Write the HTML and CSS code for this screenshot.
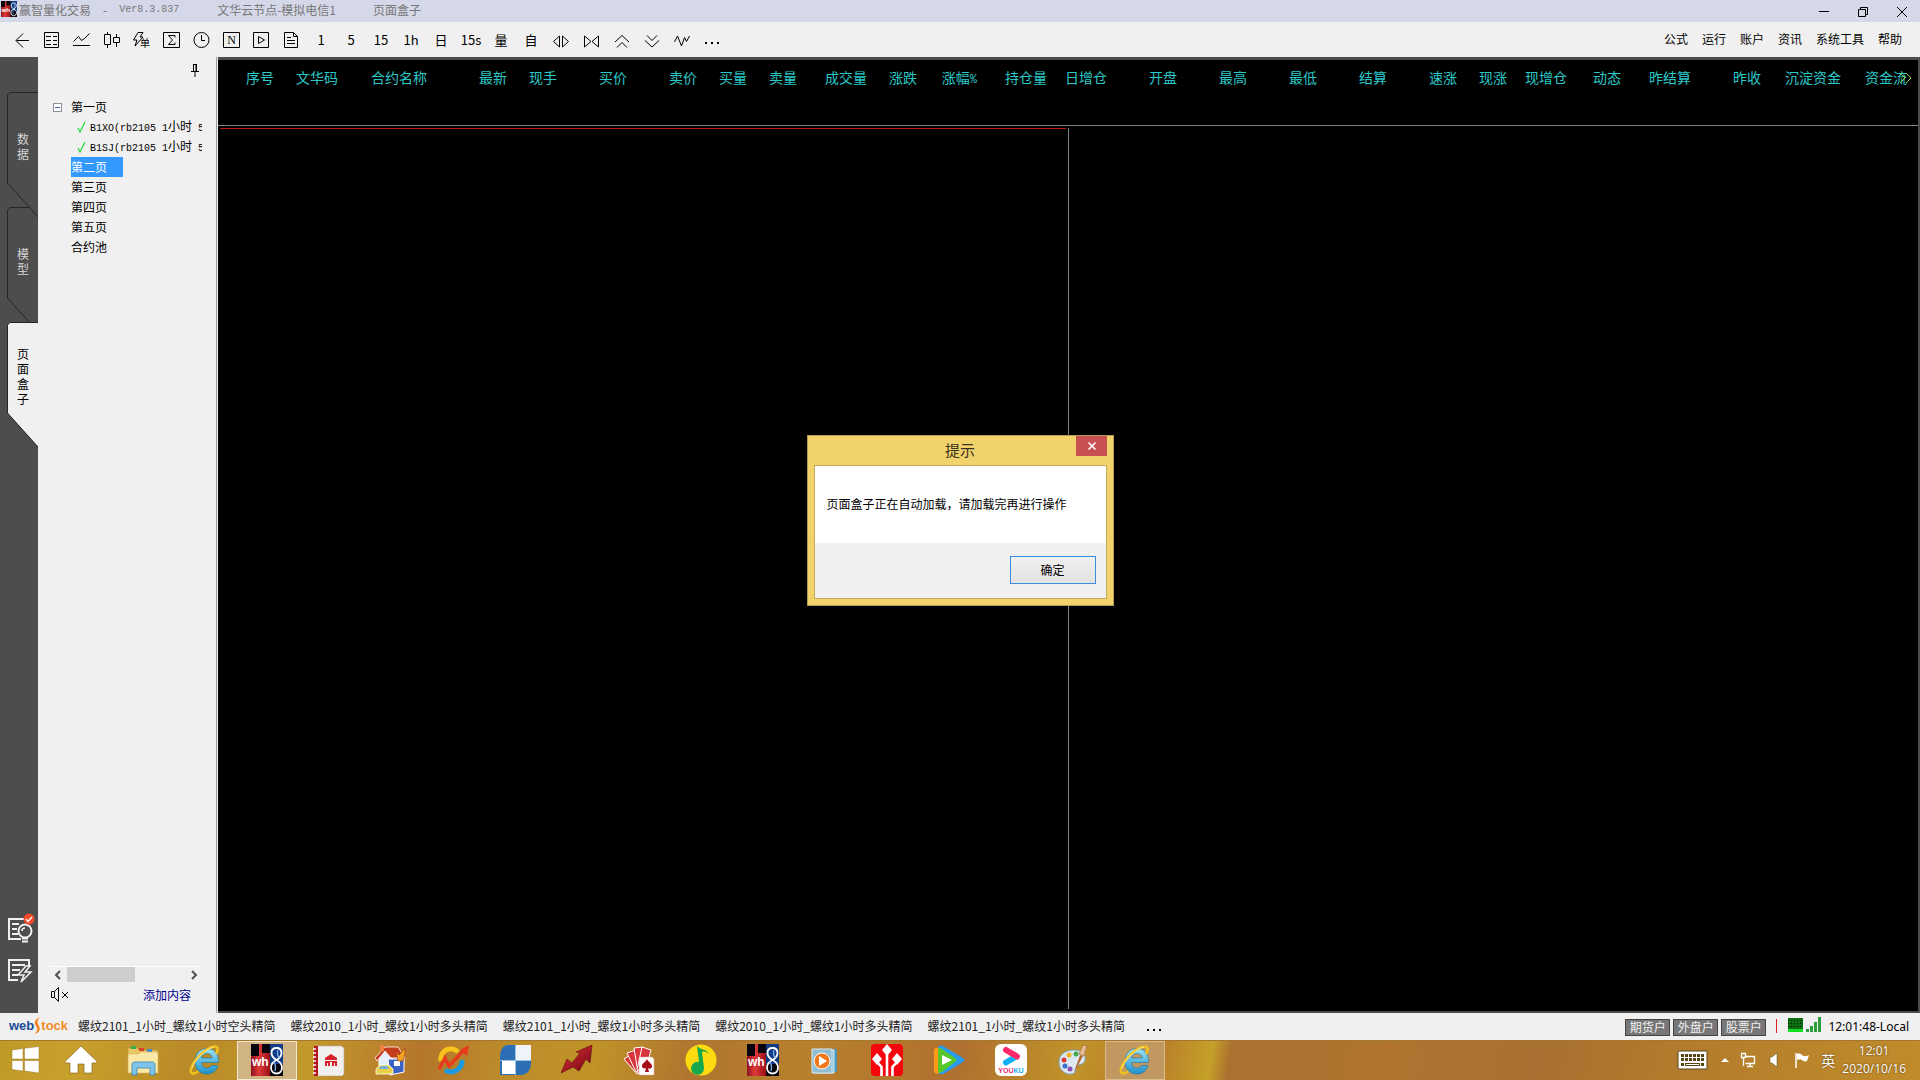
FILE: index.html
```html
<!DOCTYPE html>
<html lang="zh-CN">

<head>
    <meta charset="UTF-8">
    <meta name="viewport" content="width=device-width, initial-scale=1.0">
    <title>赢智量化交易</title>
    <link rel="stylesheet" href="styles.css">
</head>

<body>
    <!-- Shared icons -->
    <svg class="defs" width="0" height="0" aria-hidden="true">
        <defs>
            <linearGradient id="ieBlue" x1="0" y1="0" x2="0" y2="1">
                <stop offset="0" stop-color="#9be4f8" />
                <stop offset="1" stop-color="#1e8fc9" />
            </linearGradient>
            <linearGradient id="whRed" x1="0" y1="0" x2="1" y2="0">
                <stop offset="0" stop-color="#8c1020" />
                <stop offset="0.4" stop-color="#e03a3a" />
                <stop offset="1" stop-color="#9a1018" />
            </linearGradient>
            <linearGradient id="arrowRed" x1="0" y1="0" x2="1" y2="1">
                <stop offset="0" stop-color="#e8323c" />
                <stop offset="1" stop-color="#6a0410" />
            </linearGradient>
        </defs>
        <symbol id="ie" viewBox="0 0 32 32">
            <path d="M29.500 18.500H12.500c.3 3.500 2.500 5.500 5.500 5.500 2.200 0 3.800-1 4.600-2.500h6.400C27.500 26.500 23.500 30 18 30 10.500 30 6 25 6 17.500S10.500 4.500 18 4.500s12 6 11.500 14zM12.600 14h10.600c-.3-2.800-2.200-4.500-5.200-4.500s-5 1.700-5.400 4.500z" fill="url(#ieBlue)" fill-rule="evenodd" stroke="#1874a8" stroke-width="0.600" />
            <path d="M27.500 9c2-4 1.500-7-2-6.500C17 3.500 5 15 2 25c-1 4.500 1.500 6 6.500 3" fill="none" stroke="#f3c11c" stroke-width="2.600" stroke-linecap="round" />
            <path d="M25 3C17 4.500 6 15 3 24" fill="none" stroke="#fff0a0" stroke-width="0.800" />
        </symbol>
        <symbol id="wh" viewBox="0 0 32 32">
            <rect width="32" height="32" fill="#08060c" />
            <rect x="19" width="13" height="20" fill="#143c86" />
            <path d="M8 0h3v9h8v23H0V12h8z" fill="url(#whRed)" />
            <path d="M25.500 16c-3.500-2-5-4.500-5-7 0-3 2-5 5-5s5 2 5 5c0 2.500-1.500 5-5 7-4 2-5.500 4.500-5.500 7.500 0 3.500 2.300 6 5.500 6s5.500-2.500 5.500-6c0-3-1.500-5.500-5.500-7.500z" fill="none" stroke="#fff" stroke-width="1.800" />
            <path d="M22.500 18c2 2 2.500 5 1.500 9M28.500 14c-2-2-2.500-5-1.500-8" fill="none" stroke="#7db7ee" stroke-width="1.200" />
            <text x="1" y="22" class="wh-text">wh</text>
        </symbol>
    </svg>

    <div class="app">
        <header class="title-bar">
            <svg class="title-icon" width="16" height="16"><use href="#wh" /></svg>
            <span class="title-name">赢智量化交易</span>
            <span class="title-dash">-</span>
            <span class="title-version">Ver8.3.837</span>
            <span class="title-node">文华云节点-模拟电信1</span>
            <span class="title-page">页面盒子</span>
            <div class="window-controls">
                <button type="button" aria-label="最小化"><svg width="12" height="12"><path d="M1 5.500h10" stroke="#000" /></svg></button>
                <button type="button" aria-label="还原"><svg width="12" height="12"><path d="M1.500 3.500h7v7h-7zM3.500 3.500v-2h7v7h-2" fill="none" stroke="#000" /></svg></button>
                <button type="button" aria-label="关闭"><svg width="12" height="12"><path d="M1 1l10 10M11 1L1 11" stroke="#000" /></svg></button>
            </div>
        </header>

        <div class="toolbar">
            <div class="tools">
                <button type="button" aria-label="返回"><svg width="20" height="20"><path d="M17 10.500H4.500M11 3.500l-7 7 7 7" /></svg></button>
                <button type="button" aria-label="报价"><svg width="20" height="20"><path d="M2.500 2.500h14v15h-14zM4 6.500h5M11 6.500h4M4 10.500h5M11 10.500h4M4 14.500h5M11 14.500h4" /></svg></button>
                <button type="button" aria-label="分时"><svg width="20" height="20"><path d="M1 15.500h17M1.500 11.500l5-5 3 4 3-2 5-5" /></svg></button>
                <button type="button" aria-label="K线"><svg width="20" height="20"><path d="M2.500 4.500h6v10h-6zM5.500 2v2.500M5.500 14.500V18M11.500 7.500h6v5h-6zM14.500 4v3.500M14.500 12.500V17" /></svg></button>
                <button type="button" aria-label="闪电下单"><svg width="20" height="20"><path d="M6 2.500h5L8 7h3l-8 9 2-6H1.500z" /><text x="8" y="17" class="tool-mini">单</text></svg></button>
                <button type="button" aria-label="统计"><svg width="20" height="20"><path d="M1.500 2.500h16v15h-16zM13 7.500v-2H6.500l4 4.500-4 4.500H13v-2" /></svg></button>
                <button type="button" aria-label="时间"><svg width="20" height="20"><circle cx="9.500" cy="10" r="7.500" /><path d="M9.500 5v5.500H13" /></svg></button>
                <button type="button" aria-label="新闻"><svg width="20" height="20"><path d="M1.500 2.500h16v15h-16z" /><text x="9.500" y="14" class="tool-serif">N</text></svg></button>
                <button type="button" aria-label="播放"><svg width="20" height="20"><path d="M1.500 2.500h15v15h-15zM6.500 6.500v7l6-3.500z" /></svg></button>
                <button type="button" aria-label="文档"><svg width="20" height="20"><path d="M2.500 2.500h9l4 4v11h-13zM11.500 2.500v4h4M5 7.500h4M5 10.500h8M5 13.500h8" /></svg></button>
                <button type="button">1</button>
                <button type="button">5</button>
                <button type="button">15</button>
                <button type="button">1h</button>
                <button type="button">日</button>
                <button type="button">15s</button>
                <button type="button">量</button>
                <button type="button">自</button>
                <button type="button" aria-label="展开"><svg width="20" height="20"><path d="M7.500 6v11l-6-5.500zM10.500 6v11l6-5.500z" /></svg></button>
                <button type="button" aria-label="收缩"><svg width="20" height="20"><path d="M2.500 6v11l6.500-5.500zM16.500 6v11L10 11.500z" /></svg></button>
                <button type="button" aria-label="向上"><svg width="20" height="20"><path d="M3 12l7-6.500 7 6.500M5 17.500l5-5 5 5" /></svg></button>
                <button type="button" aria-label="向下"><svg width="20" height="20"><path d="M3 10.500l7 6.500 7-6.500M5 5.500l5 5 5-5" /></svg></button>
                <button type="button" aria-label="指标"><svg width="20" height="20"><path d="M2.500 12l3-6 4 10 3-8.500 2 4L17.500 6" /></svg></button>
                <button type="button" aria-label="更多"><svg width="20" height="20"><path d="M3 13h2M9 13h2M15 13h2" class="dots" /></svg></button>
            </div>
            <nav class="menu">
                <a href="#">公式</a>
                <a href="#">运行</a>
                <a href="#">账户</a>
                <a href="#">资讯</a>
                <a href="#">系统工具</a>
                <a href="#">帮助</a>
            </nav>
        </div>

        <main class="main">
            <aside class="side-tabs">
                <button type="button" class="side-tab front">
                    <svg width="31" height="126"><path d="M31 .5H3L.500 3v88L31 125" /></svg>
                    <span>数据</span>
                </button>
                <button type="button" class="side-tab">
                    <svg width="31" height="126"><path d="M31 .5H3L.500 3v88L31 125" /></svg>
                    <span>模型</span>
                </button>
                <button type="button" class="side-tab active">
                    <svg width="31" height="126"><path d="M31 .5H3L.500 3v88L31 125" /></svg>
                    <span>页面盒子</span>
                </button>
                <div class="side-actions">
                    <button type="button" aria-label="提示">
                        <svg width="28" height="32" fill="none" stroke="#f0f0f0" stroke-width="2">
                            <path d="M18 6H2v20h12M5 11h7M5 16h5M5 21h6" />
                            <circle cx="18" cy="18" r="6.500" fill="#4d4d4d" />
                            <path d="M15 25.500h6M15 28.500h6" />
                            <path d="M15 18a3 3 0 0 1 3-3" stroke-width="1.500" />
                            <circle cx="22" cy="6" r="5.500" fill="#f04a28" stroke="none" />
                            <path d="M19 6l2 2.500 4-4.500" stroke-width="1.500" />
                        </svg>
                    </button>
                    <button type="button" aria-label="快速下单">
                        <svg width="28" height="28" fill="none" stroke="#f0f0f0" stroke-width="2">
                            <path d="M22 9V3H2v20h9M5 8h13M5 13h8M5 18h6" />
                            <path d="M19 9l-8 9h6l-3 7 10-10h-6l5-6z" fill="#4d4d4d" stroke-width="1.500" />
                        </svg>
                    </button>
                </div>
            </aside>

            <section class="tree-panel">
                <button type="button" class="pin" aria-label="固定"><svg width="8" height="14"><path d="M2.500 1v7M5.500 1v7M2 1.500h4M0 8.500h8M4 9v5M5 1v7" fill="none" stroke="#000" /></svg></button>
                <ul class="tree">
                    <li>
                        <svg class="expander" width="9" height="9"><rect x="0.500" y="0.500" width="8" height="8" fill="#fff" stroke="#8e9299" /><path d="M2 4.500h5" stroke="#3c5ab4" /></svg>
                        <span>第一页</span>
                    </li>
                    <li class="child">
                        <svg width="9" height="12"><path d="M1 7l2 4 5-10" fill="none" stroke="#1fdc3c" stroke-width="1.200" /></svg>
                        <span><i>B1XO(rb2105 1</i>小时<i> 5</i></span>
                    </li>
                    <li class="child">
                        <svg width="9" height="12"><path d="M1 7l2 4 5-10" fill="none" stroke="#1fdc3c" stroke-width="1.200" /></svg>
                        <span><i>B1SJ(rb2105 1</i>小时<i> 5</i></span>
                    </li>
                    <li><span class="selected">第二页</span></li>
                    <li><span>第三页</span></li>
                    <li><span>第四页</span></li>
                    <li><span>第五页</span></li>
                    <li><span>合约池</span></li>
                </ul>
                <div class="scrollbar">
                    <svg width="17" height="16"><path d="M10 4L6 8l4 4" /></svg>
                    <div class="scroll-track"><div class="scroll-thumb"></div></div>
                    <svg width="17" height="16"><path d="M7 4l4 4-4 4" /></svg>
                </div>
                <div class="tree-footer">
                    <button type="button" aria-label="静音"><svg width="20" height="16" fill="none" stroke="#000"><path d="M1.500 4.500h3v6h-3zM4.500 4.500l4-4v14l-4-4M12 5l6 6M18 5l-6 6" /></svg></button>
                    <a href="#">添加内容</a>
                </div>
            </section>

            <section class="workspace">
                <div class="quote-head">
                    <table class="quotes">
                        <colgroup>
                            <col class="w56"><col class="w64"><col class="w89"><col class="w80"><col class="w50">
                            <col class="w70"><col class="w70"><col class="w50"><col class="w50"><col class="w70">
                            <col class="w50"><col class="w60"><col class="w70"><col class="w60"><col class="w70">
                            <col class="w70"><col class="w70"><col class="w70"><col class="w70"><col class="w50">
                            <col class="w60"><col class="w54"><col class="w70"><col class="w70"><col class="w80">
                            <col class="w66">
                        </colgroup>
                        <thead>
                            <tr>
                                <th>序号</th>
                                <th>文华码</th>
                                <th>合约名称</th>
                                <th>最新</th>
                                <th>现手</th>
                                <th>买价</th>
                                <th>卖价</th>
                                <th>买量</th>
                                <th>卖量</th>
                                <th>成交量</th>
                                <th>涨跌</th>
                                <th>涨幅<i>%</i></th>
                                <th>持仓量</th>
                                <th>日增仓</th>
                                <th>开盘</th>
                                <th>最高</th>
                                <th>最低</th>
                                <th>结算</th>
                                <th>速涨</th>
                                <th>现涨</th>
                                <th>现增仓</th>
                                <th>动态</th>
                                <th>昨结算</th>
                                <th>昨收</th>
                                <th>沉淀资金</th>
                                <th>资金流</th>
                            </tr>
                        </thead>
                    </table>
                    <button type="button" class="more-cols" aria-label="更多列"><svg width="14" height="14"><path d="M1 2l5 5-5 5M7 2l5 5-5 5" fill="none" stroke="#8fd43c" /></svg></button>
                </div>
                <div class="panes">
                    <div class="pane pane-left"></div>
                    <div class="pane pane-right"></div>
                </div>
            </section>
        </main>

        <footer class="status-bar">
            <div class="brand"><span class="brand-web">web</span><svg width="7" height="18"><path d="M6 0C0 3 0 6 2 9s2 5-2 8c5-1 7-4 5-8S3 4 6 0z" fill="#f58220" /></svg><span class="brand-tock">tock</span></div>
            <ul class="models">
                <li>螺纹2101_1小时_螺纹1小时空头精简</li>
                <li>螺纹2010_1小时_螺纹1小时多头精简</li>
                <li>螺纹2101_1小时_螺纹1小时多头精简</li>
                <li>螺纹2010_1小时_螺纹1小时多头精简</li>
                <li>螺纹2101_1小时_螺纹1小时多头精简</li>
            </ul>
            <button type="button" class="status-more" aria-label="更多"><svg width="16" height="4"><path d="M1 2h2M7 2h2M13 2h2" stroke="#000" stroke-width="2" /></svg></button>
            <div class="accounts">
                <button type="button">期货户</button>
                <button type="button">外盘户</button>
                <button type="button">股票户</button>
            </div>
            <svg class="signals" width="46" height="18">
                <path d="M.5 2v14" stroke="#e02020" />
                <path d="M12 1h15v11H12z" fill="#0b6e12" />
                <path d="M12 3.500h15M12 6.500h15M12 9.500h15" stroke="#001a00" stroke-dasharray="1 2" />
                <path d="M12 12h15v3H12z" fill="#10e020" />
                <path d="M30 12h3v3h-3zM34 9h3v6h-3zM38 5h3v10h-3zM42 0h3v15h-3z" fill="#2f9a38" />
            </svg>
            <span class="local-time">12:01:48-Local</span>
        </footer>

        <div class="dialog-layer">
            <div class="dialog" role="dialog" aria-labelledby="dialogTitle">
                <h2 id="dialogTitle">提示</h2>
                <button type="button" class="dialog-close" aria-label="关闭"><svg width="10" height="10"><path d="M1.500 1.500l7 7M8.500 1.500l-7 7" stroke="#fff" stroke-width="1.600" /></svg></button>
                <div class="dialog-body">
                    <p>页面盒子正在自动加载，请加载完再进行操作</p>
                    <div class="dialog-actions">
                        <button type="button" class="ok">确定</button>
                    </div>
                </div>
            </div>
        </div>
    </div>

    <div class="taskbar">
        <button type="button" class="start" aria-label="开始"><svg width="32" height="32"><path d="M2 6l11-1.500V15H2zM14.500 4.300L29 2.500V15H14.500zM2 16.500h11V27L2 25.500zM14.500 16.500H29V29l-14.500-2z" fill="#fff" stroke="#8a6410" stroke-width="0.400" /></svg></button>
        <button type="button" aria-label="主页"><svg width="32" height="32"><path d="M16 2L0 17.500l1 1.500h4v10h8v-9h6v9h8V19h4l1-1.500z" fill="#fff" stroke="#7a5a14" stroke-width="0.600" /></svg></button>
        <button type="button" aria-label="文件夹"><svg width="32" height="32">
            <path d="M1 4h9l2 2h18v22H1z" fill="#e9c763" stroke="#b7923a" stroke-width="0.600" />
            <path d="M4 2h5v3H4z" fill="#35b048" /><path d="M12 4h5v3h-5z" fill="#d8402c" /><path d="M20 5h5v3h-5z" fill="#3c8fd8" />
            <path d="M1 10h11l2-2h17v21H1z" fill="#fae9a6" stroke="#d4b45c" stroke-width="0.600" />
            <path d="M5 31V21c0-2 1-3 3-3h17c2 0 3 1 3 3v10h-5v-7H10v7z" fill="#7ec3ea" stroke="#3b85b4" stroke-width="0.800" />
        </svg></button>
        <button type="button" aria-label="浏览器"><svg width="32" height="32"><use href="#ie" /></svg></button>
        <button type="button" class="running current" aria-label="赢智"><svg width="32" height="32"><use href="#wh" /></svg></button>
        <button type="button" aria-label="通讯录"><svg width="32" height="32">
            <path d="M3 2h25l3 2v26l-2 2H3z" fill="#f2f0ee" stroke="#b9a9a0" stroke-width="0.600" />
            <path d="M1 2h4v30H1z" fill="#b41420" />
            <path d="M0 5h3M0 9h3M0 13h3M0 17h3M0 21h3M0 25h3M0 29h3" stroke="#fff" stroke-width="1.400" />
            <path d="M12 14l6-4 6 4v2H12zM12 17h12v5h-2v-3h-1v3h-2v-4h-2v4h-2v-3h-1v3h-2z" fill="#d8202a" />
        </svg></button>
        <button type="button" aria-label="房产"><svg width="32" height="32">
            <path d="M4 14l8-8 6 7v16H4z" fill="#e6eefc" stroke="#fff" /><path d="M13 15h16v13l-14 3z" fill="#3a62c4" stroke="#fff" />
            <path d="M19 17h6v5h-6z" fill="#fff" />
            <path d="M0 14L10 3h13l7 11H16L10 7 2 17z" fill="#c43c1c" stroke="#fff" stroke-width="0.800" />
            <path d="M5 1h4v6H5z" fill="#f08040" />
            <path d="M21 7l3 4 6-7v6l-2 7h-5z" fill="#f4a020" stroke="#a03810" stroke-width="0.600" />
            <path d="M1 25l4-4h9l4 4v5H1z" fill="#e8d048" stroke="#fff" stroke-width="0.800" /><path d="M6 22h6l2 3H4z" fill="#6fb0e0" />
        </svg></button>
        <button type="button" aria-label="行情"><svg width="32" height="32" fill="none">
            <path d="M4 17a10 10 0 0 1 17-9" stroke="#f7c41c" stroke-width="5" />
            <path d="M25 16a11 11 0 0 1-17 10" stroke="#1e9ae0" stroke-width="5" />
            <path d="M2 25l6-11 4 8L27 6" stroke="#e83a1c" stroke-width="3.500" /><path d="M32 1l-2 11-7-6z" fill="#e83a1c" />
        </svg></button>
        <button type="button" aria-label="方格"><svg width="32" height="32">
            <path d="M9 1h23v18c0 7-4 12-10 12H1V13C1 6 4 1 9 1z" fill="#2d6fb4" />
            <path d="M17 1h15v15H17z" fill="#eef4fa" /><path d="M3 17h13v13H3z" fill="#fff" />
            <path d="M16.500 1v30M1 16.500h31" stroke="#9cc2e6" />
        </svg></button>
        <button type="button" aria-label="走势"><svg width="32" height="32"><path d="M0 29l6-14 5 4 8-10-4-1 16-7-2 18-4-4-7 12-6-4z" fill="url(#arrowRed)" stroke="#600810" stroke-width="0.600" /></svg></button>
        <button type="button" aria-label="纸牌"><svg width="32" height="32">
            <g fill="#d8343c" stroke="#fff"><path d="M1 15l8-5 12 15-7 5z" /><path d="M4 9l9-3 8 19-8 3z" /><path d="M11 4l9-1 3 24-8 2z" /><path d="M19 3l9 3-6 22-8-2z" /></g>
            <path d="M16 13h13l2 2v16H16z" fill="#fff" stroke="#d0a0a0" stroke-width="0.500" />
            <path d="M24 15c1 3 6 5 5 8-1 2-3 2-4 1l1 4h-4l1-4c-2 1-4 0-4-2 0-3 4-4 5-7z" fill="#a80c18" />
        </svg></button>
        <button type="button" aria-label="音乐"><svg width="32" height="32"><circle cx="16" cy="16" r="15.500" fill="#fcdc10" /><path d="M12 2c3 4 10 3 12 8-2-2-5-3-7-2l2 16a6.500 6.500 0 1 1-5-6z" fill="#17a84e" /></svg></button>
        <button type="button" aria-label="赢智"><svg width="32" height="32"><use href="#wh" /></svg></button>
        <button type="button" aria-label="播放器"><svg width="32" height="32">
            <path d="M8 5h20v23H8z" fill="#4a96bc" /><path d="M5 6h20v23H5z" fill="#78b6d4" stroke="#e0f0f8" /><path d="M3 5h20v24H3z" fill="#8fbdd2" stroke="#d6e8f0" />
            <circle cx="13" cy="17" r="8" fill="#f07818" stroke="#fff" /><path d="M10 12v10l8-5z" fill="#fff" />
        </svg></button>
        <button type="button" aria-label="证券"><svg width="32" height="32">
            <rect width="32" height="32" rx="4" fill="#f4040c" />
            <path d="M16 0l5 6-5 6-5-6zM6 9l5 6-5 6-5-6zM26 9l5 6-5 6-5-6z" fill="#fff" />
            <path d="M16 10v22M6 18l4.500 5v9M26 18l-4.500 5v9" fill="none" stroke="#fff" stroke-width="2.600" />
        </svg></button>
        <button type="button" aria-label="视频"><svg width="32" height="32">
            <path d="M5 4c0-2 2-3 5-2l20 12c2 1 2 3 0 4L12 29C7 32 5 30 5 26z" fill="#2a9cf0" />
            <path d="M1 7c0-3 2-4 5-3v25c-3 2-5 0-5-3z" fill="#ff9a18" />
            <path d="M5 6c0-2 2-2 4-1l13 9c2 1 2 3 0 4L9 28c-2 1-4 1-4-1z" fill="#56c828" /><path d="M9 11v10l10-5z" fill="#fff" />
        </svg></button>
        <button type="button" aria-label="优酷"><svg width="32" height="32">
            <rect width="32" height="32" rx="6" fill="#fff" />
            <path d="M11 18.500l10-6" stroke="#10b0f8" stroke-width="6" stroke-linecap="round" /><path d="M11 6l11 6.500" stroke="#ff2868" stroke-width="6" stroke-linecap="round" />
            <text x="16" y="29" class="youku-text">YOU<tspan class="youku-blue">KU</tspan></text>
        </svg></button>
        <button type="button" aria-label="画图"><svg width="32" height="32">
            <path d="M2 18C2 10 9 6 17 6s12 5 11 10-6 4-8 6 1 7-5 8C8 31 2 26 2 18z" fill="#dce9f4" stroke="#7da0bc" />
            <circle cx="7" cy="16" r="2.500" fill="#e03a30" /><circle cx="12" cy="11" r="2.500" fill="#f0b420" /><circle cx="19" cy="10" r="2.500" fill="#40a848" /><circle cx="8" cy="22" r="2.500" fill="#3a70d0" /><circle cx="13" cy="25" r="2.500" fill="#8a50b8" />
            <path d="M16 31l7-20 3 1z" fill="#b86c30" /><path d="M22 10l4-9 4 1-3 10z" fill="#e8b890" stroke="#a06838" stroke-width="0.600" />
        </svg></button>
        <button type="button" class="running" aria-label="浏览器窗口"><svg width="32" height="32"><use href="#ie" /></svg></button>

        <div class="tray">
            <svg width="31" height="20"><rect x="1" y="1" width="29" height="18" rx="1" fill="#fff" stroke="#5a4416" /><path d="M4 5.500h23M4 9.500h23" stroke="#5a4416" stroke-width="3" stroke-dasharray="3 1" /><path d="M4 14.500h3M8 14.500h15M24 14.500h3" stroke="#5a4416" stroke-width="3" /><path d="M9 14.500h13" stroke="#fff" /></svg>
            <svg width="8" height="6"><path d="M0 5l4-4 4 4z" fill="#fff" /></svg>
            <svg width="16" height="16" fill="none" stroke="#fff"><path d="M6 4.500h8.500v7h-9M7 14.500h6M10 12v2M1.500 1.500h4v4h-4zM3.500 6v8" stroke-width="1.300" /></svg>
            <svg width="16" height="16"><path d="M3 5h2l5-4v14l-5-4H3z" fill="#fff" stroke="#5a4416" stroke-width="0.500" /></svg>
            <svg width="16" height="16"><path d="M2 1v15" stroke="#fff" stroke-width="1.500" /><path d="M3 2c3-1 4 0 5 1s4 2 7 0l-2 6c-2 1-4 0-5-1s-3-1-5 0z" fill="#fff" /></svg>
            <span class="lang">英</span>
            <div class="clock"><span>12:01</span><span>2020/10/16</span></div>
        </div>
    </div>
</body>

</html>
```
FILE: styles.css
```css
* {
    box-sizing: border-box;
}

body {
    margin: 0;
    height: 100vh;
    display: flex;
    flex-direction: column;
    overflow: hidden;
    background-color: #f0f0f0;
    color: #000;
    font-family: "Noto Sans CJK SC", sans-serif;
    font-size: 12px;
    line-height: 16px;
}

button {
    margin: 0;
    padding: 0;
    border: none;
    background: none;
    color: inherit;
    font: inherit;
    cursor: pointer;
}

a {
    color: inherit;
    text-decoration: none;
}

ul {
    list-style: none;
    margin: 0;
    padding: 0;
}

svg {
    display: block;
    flex: none;
}

.defs {
    position: absolute;
}

.wh-text {
    font: bold 12px "Liberation Sans", sans-serif;
    fill: #fff;
}

.youku-text {
    font: bold 7px "Liberation Sans", sans-serif;
    fill: #f0286c;
    text-anchor: middle;
}

.youku-blue {
    fill: #10a8f8;
}

.app {
    position: relative;
    flex: 1;
    min-height: 0;
    display: flex;
    flex-direction: column;
}

/* title bar */
.title-bar {
    display: flex;
    align-items: center;
    height: 22px;
    padding: 0 0 2px 1px;
    background-color: #d5d8e8;
    color: #777;
    white-space: nowrap;
}

.title-icon {
    margin-bottom: 2px;
}

.title-name {
    margin-left: 2px;
}

.title-dash {
    margin: 0 12px;
}

.title-version,
.tree i {
    font-family: "Liberation Mono", monospace;
    font-size: 10px;
    font-style: normal;
}

.title-node {
    margin-left: 38px;
}

.title-page {
    margin-left: 37px;
}

.window-controls {
    display: flex;
    margin-left: auto;
    padding: 4px 0 0;
}

.window-controls button {
    width: 39px;
    padding: 0 14px 0 13px;
}

.window-controls button:last-child {
    width: 37px;
    padding: 0 12px 0 13px;
}

/* toolbar */
.toolbar {
    display: flex;
    justify-content: space-between;
    align-items: center;
    height: 35px;
    padding: 0 18px 0 7px;
}

.tools {
    display: flex;
}

.tools button {
    width: 30px;
    height: 35px;
    padding: 0 2px 0 0;
    font-size: 13px;
}

.tools svg {
    margin: 1px 5px 0;
    fill: none;
    stroke: #000;
}

.tools .dots {
    stroke-width: 2;
}

.tools text {
    fill: #000;
    stroke: none;
}

.tool-mini {
    font-size: 10px;
}

.tool-serif {
    font: 12px "Liberation Serif", serif;
    text-anchor: middle;
}

.menu {
    display: flex;
    gap: 14px;
    padding-bottom: 2px;
}

/* main area */
.main {
    flex: 1;
    min-height: 0;
    display: flex;
}

.side-tabs {
    display: flex;
    flex-direction: column;
    width: 38px;
    padding: 35px 0 28px 7px;
    background-color: #4d4d4d;
}

.side-tab {
    position: relative;
    height: 115px;
    flex: none;
    padding: 0 8px 8px 10px;
    color: #d4d4d4;
    line-height: 15px;
}

.side-tab svg {
    position: absolute;
    left: 0;
    top: 0;
    fill: #4d4d4d;
    stroke: #262626;
}

.side-tab span {
    position: relative;
    display: block;
    width: 12px;
    word-break: break-all;
}

.side-tab.front {
    z-index: 1;
}

.side-tab.active {
    z-index: 1;
    color: #000;
}

.side-tab.active svg {
    fill: #f0f0f0;
}

.side-actions {
    display: flex;
    flex-direction: column;
    gap: 12px;
    margin-top: auto;
}

.tree-panel {
    display: flex;
    flex-direction: column;
    width: 180px;
    padding: 6px 14px 7px 12px;
    border-right: 2px groove #f0f0f0;
}

.pin {
    align-self: flex-end;
    margin-right: 3px;
}

.tree {
    flex: 1;
    margin-top: 20px;
    overflow: hidden;
    white-space: nowrap;
}

.tree li {
    display: flex;
    align-items: center;
    height: 20px;
    padding-left: 21px;
    line-height: 20px;
}

.tree .expander {
    margin: 0 9px 0 -18px;
}

.tree .child {
    gap: 4px;
    padding-left: 27px;
}

.tree i {
    white-space: pre;
}

.selected {
    padding-right: 16px;
    background-color: #3399ff;
    color: #fff;
}

.scrollbar {
    display: flex;
    border-top: 1px solid #fff;
}

.scrollbar svg {
    fill: none;
    stroke: #505050;
    stroke-width: 2;
}

.scroll-track {
    flex: 1;
}

.scroll-thumb {
    width: 58%;
    height: 15px;
    background-color: #cdcdcd;
}

.tree-footer {
    display: flex;
    justify-content: space-between;
    align-items: center;
    height: 23px;
    padding-right: 11px;
    color: #000090;
}

.workspace {
    flex: 1;
    min-width: 0;
    display: flex;
    flex-direction: column;
    border: solid #4d4d4d;
    border-width: 3px 2px 2px 0;
    background-color: #000;
}

.quote-head {
    position: relative;
    height: 66px;
    padding-top: 7px;
    border-bottom: 1px solid #808080;
    overflow: hidden;
}

.quotes {
    width: 0;
    table-layout: fixed;
    border-collapse: collapse;
}

.quotes th {
    padding: 0;
    color: #2cc8c8;
    font-size: 14px;
    font-weight: normal;
    line-height: 20px;
    text-align: right;
    vertical-align: top;
    white-space: nowrap;
}

.quotes i {
    font-family: "Liberation Mono", monospace;
    font-size: 12px;
    font-style: normal;
    line-height: 12px;
}

.w50 { width: 50px; }
.w54 { width: 54px; }
.w56 { width: 56px; }
.w60 { width: 60px; }
.w64 { width: 64px; }
.w66 { width: 66px; }
.w70 { width: 70px; }
.w80 { width: 80px; }
.w89 { width: 89px; }

.more-cols {
    position: absolute;
    top: 11px;
    right: 5px;
}

.panes {
    flex: 1;
    display: grid;
    grid-template-columns: 1fr 1fr;
    padding: 2px 0;
}

.pane-left {
    margin: 0 2px;
    border-top: 1px solid #c01818;
}

.pane-right {
    border-left: 1px solid #808080;
}

/* status bar */
.status-bar {
    display: flex;
    align-items: center;
    height: 27px;
    padding: 0 11px 2px 9px;
    color: #222;
    white-space: nowrap;
}

.brand {
    display: flex;
    align-items: center;
    width: 69px;
    font: bold 13px/18px "Liberation Sans", sans-serif;
}

.brand-web {
    color: #1c4c94;
}

.brand-tock {
    color: #f08c28;
}

.models {
    display: flex;
    gap: 15px;
}

.status-more {
    margin: 8px 0 0 21px;
}

.accounts {
    display: flex;
    gap: 3px;
    margin: 3px 10px 0 auto;
}

.accounts button {
    width: 45px;
    height: 17px;
    border: 1px solid #444;
    background-color: #777;
    color: #f0f0f0;
    line-height: 14px;
}

.local-time {
    margin: 3px 0 0 6px;
    font-family: "Noto Sans", sans-serif;
    color: #000;
}

/* message box */
.dialog-layer {
    position: absolute;
    inset: 0;
    display: flex;
    justify-content: center;
    align-items: center;
}

.dialog {
    position: relative;
    width: 307px;
    padding: 0 6px 6px;
    border: 1px solid #b59c4c;
    background-color: #f2d36b;
}

.dialog h2 {
    margin: 0;
    padding-bottom: 2px;
    color: #3a3220;
    font-size: 15px;
    font-weight: normal;
    line-height: 27px;
    text-align: center;
}

.dialog-close {
    position: absolute;
    top: 0;
    right: 6px;
    width: 31px;
    height: 20px;
    padding: 0 11px;
    background-color: #c75050;
}

.dialog-body {
    border: 1px solid #c4ab58;
    background-color: #fff;
}

.dialog-body p {
    margin: 0;
    padding: 30px 12px 31px;
}

.dialog-actions {
    display: flex;
    justify-content: flex-end;
    padding: 13px 10px 14px;
    background-color: #f0f0f0;
}

.ok {
    width: 86px;
    height: 28px;
    border: 1px solid #3c8cdc;
    background: linear-gradient(#f0f0f0, #e2e2e2);
}

/* taskbar */
.taskbar {
    display: flex;
    gap: 2px;
    height: 40px;
    padding-right: 14px;
    border-top: 1px solid #a4772c;
    background: linear-gradient(100deg, #c09a28 0, #c8a02c 4%, #b98a28 10%, #c29a2c 16%, #b5762c 22%, #bb8a2a 26%, #c09428 31%, #b07430 36%, #b8802c 42%, #b07030 50%, #c09428 56%, #b87a2a 60%, #c4a028 63%, #ac7030 64%, #b07430 72%, #a87030 80%, #b47c2c 88%, #c08c2a 100%);
}

.taskbar button {
    width: 60px;
    height: 39px;
    padding: 0 13px 1px;
    border: 1px solid transparent;
}

.taskbar .start {
    width: 49px;
    padding: 0 0 1px 9px;
}

.taskbar .running {
    border-color: #d8bc8c;
    background-color: #c09860;
}

.taskbar .current {
    border-color: #f4e8d0;
    background-color: #d0b484;
}

.tray {
    display: flex;
    align-items: center;
    gap: 11px;
    margin-left: auto;
    padding-bottom: 1px;
    color: #fff;
    text-shadow: 0 0 2px #4a3410;
}

.tray > svg:first-child {
    margin-right: 2px;
}

.lang {
    font-size: 14px;
}

.clock {
    display: flex;
    flex-direction: column;
    margin-left: -4px;
    font-family: "Open Sans", sans-serif;
    line-height: 18px;
    text-align: center;
}
```
